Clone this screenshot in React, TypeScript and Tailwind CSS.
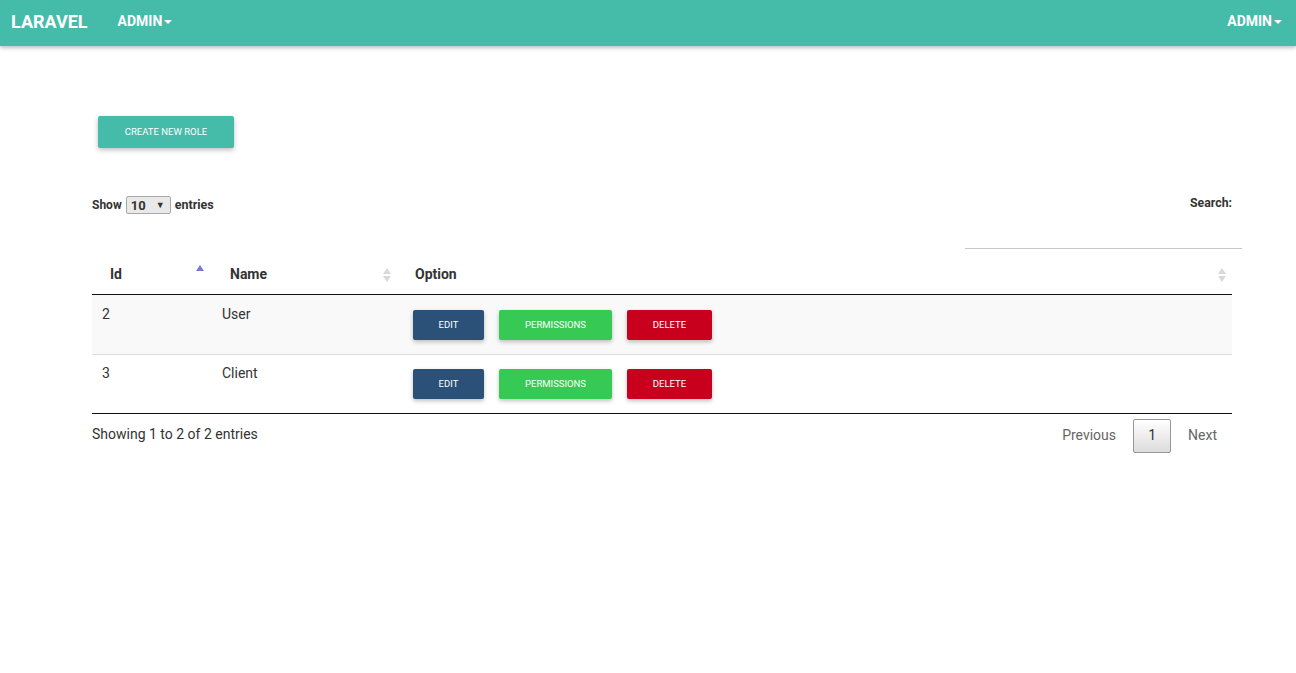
import React from "react";

const Caret = () => (
  <span className="ml-[2px] inline-block h-0 w-0 border-l-[4px] border-r-[4px] border-t-[4px] border-l-transparent border-r-transparent border-t-white align-middle" />
);

const SortBoth = () => (
  <svg width="8" height="14" viewBox="0 0 8 14" className="inline-block">
    <path d="M4 0 L8 6 L0 6 Z" fill="#d9d9d9" />
    <path d="M4 14 L8 8 L0 8 Z" fill="#d9d9d9" />
  </svg>
);

const SortAsc = () => (
  <svg width="8" height="14" viewBox="0 0 8 14" className="inline-block">
    <path d="M4 0 L8 6 L0 6 Z" fill="#7a77d9" />
  </svg>
);

const btnBase =
  "h-[30px] rounded-[2px] text-[9.5px] uppercase text-white shadow-[0_2px_4px_rgba(0,0,0,0.25)] flex items-center justify-center";

const rows = [
  { id: 2, name: "User", cls: "bg-[#f9f9f9] border-b border-[#ddd] h-[60px]", tp: "pt-[9px]", bp: "pt-[15px]" },
  { id: 3, name: "Client", cls: "bg-white border-b border-[#111] h-[59px]", tp: "pt-[8px]", bp: "pt-[14px]" },
];

export default function App() {
  return (
    <div className="min-h-[673px] bg-white text-[#333]" style={{ fontFamily: "Roboto, 'Liberation Sans', sans-serif" }}>
      <nav className="flex h-[46px] items-start justify-between bg-[#45bba9] pt-[8px] shadow-[0_2px_4px_rgba(0,0,0,0.25)]">
        <div className="flex items-center">
          <span className="ml-[11px] text-[18px] font-bold text-white">LARAVEL</span>
          <span className="ml-[30px] flex items-center text-[14px] font-bold text-white">
            ADMIN
            <Caret />
          </span>
        </div>
        <span className="mr-[14px] mt-[3px] flex items-center text-[14px] font-bold text-white">
          ADMIN
          <Caret />
        </span>
      </nav>

      <div className="mx-[92px] w-[1140px] pt-[70px]">
        <button className="ml-[6px] h-[32px] w-[136px] rounded-[2px] bg-[#45bba9] text-[9.5px] uppercase text-white shadow-[0_2px_5px_rgba(0,0,0,0.26)]">
          CREATE NEW ROLE
        </button>

        <div className="mt-[46px] flex items-start justify-between">
          <div className="mt-[2px] flex items-center text-[12px] font-bold text-[#333]">
            Show
            <span className="ml-[4px] mr-[4px] flex h-[18px] w-[45px] items-center justify-between rounded-[2px] border border-[#a9a9a9] bg-[#e9e9e9] pl-[4px] pr-[5px] text-[13px] font-bold">
              10
              <span className="text-[9px]">▼</span>
            </span>
            <span className="text-[12.5px]">entries</span>
          </div>
          <div className="flex flex-col items-end">
            <span className="text-[12.3px] font-bold text-[#333]">Search:</span>
            <div className="mr-[-10px] mt-[36px] w-[277px] border-b border-[#c8c8c8]" />
          </div>
        </div>

        <table className="mt-[6px] w-full border-collapse">
          <thead>
            <tr className="h-[39px] border-b border-[#111] text-left text-[14px] font-bold text-[#333]">
              <th className="w-[120px] pl-[18px] pr-[8px] font-bold">
                <div className="flex items-center justify-between">
                  <span>Id</span>
                  <span className="-mt-[6px]"><SortAsc /></span>
                </div>
              </th>
              <th className="w-[185px] pl-[18px] pr-[6px] font-bold">
                <div className="flex items-center justify-between">
                  <span>Name</span>
                  <SortBoth />
                </div>
              </th>
              <th className="pl-[18px] pr-[6px] font-bold">
                <div className="flex items-center justify-between">
                  <span>Option</span>
                  <SortBoth />
                </div>
              </th>
            </tr>
          </thead>
          <tbody>
            {rows.map((r) => (
              <tr key={r.id} className={`${r.cls} align-top text-[14px]`}>
                <td className={`pl-[10px] ${r.tp}`}>{r.id}</td>
                <td className={`pl-[10px] ${r.tp}`}>{r.name}</td>
                <td className={`pl-[16px] ${r.bp}`}>
                  <div className="flex gap-[15px]">
                    <div className={`${btnBase} w-[71px] bg-[#2c5179]`}>EDIT</div>
                    <div className={`${btnBase} w-[113px] bg-[#36c954]`}>PERMISSIONS</div>
                    <div className={`${btnBase} w-[85px] bg-[#c8001e]`}>DELETE</div>
                  </div>
                </td>
              </tr>
            ))}
          </tbody>
        </table>

        <div className="mt-[4px] flex items-start justify-between">
          <span className="mt-[6px] text-[14px] text-[#333]">Showing 1 to 2 of 2 entries</span>
          <div className="mr-[15px] mt-[1px] flex items-center text-[14px] text-[#666]">
            <span className="mr-[17px]">Previous</span>
            <span className="flex h-[34px] w-[38px] items-center justify-center rounded-[2px] border border-[#979797] bg-gradient-to-b from-white to-[#dcdcdc] text-[#333]">
              1
            </span>
            <span className="ml-[17px]">Next</span>
          </div>
        </div>
      </div>
    </div>
  );
}
